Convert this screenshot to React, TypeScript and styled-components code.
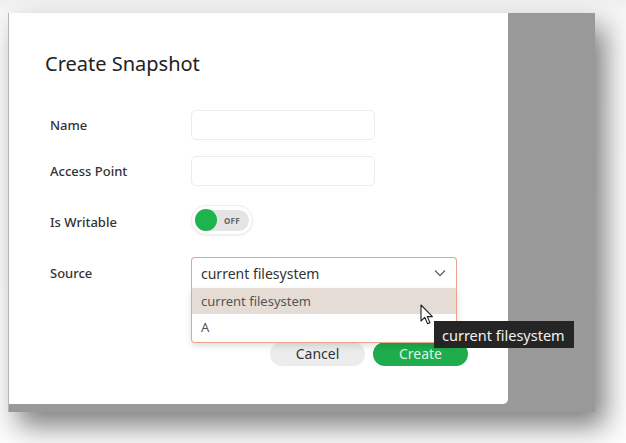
import React from "react";
import styled, { createGlobalStyle } from "styled-components";

const Global = createGlobalStyle`
  html, body { margin: 0; padding: 0; }
  body {
    width: 626px;
    height: 443px;
    overflow: hidden;
    background: linear-gradient(180deg, #f0f0f0 0px, #f6f6f6 12px, #fbfbfb 40px, #fdfdfd 100%);
    font-family: "Noto Sans", "Open Sans", sans-serif;
  }
`;

const Page = styled.div`
  padding: 13px 0 0 8px;
`;

const Frame = styled.div`
  width: 587px;
  height: 399px;
  background: #999999;
  border-left: 1px solid #b4b4b4;
  box-sizing: border-box;
  box-shadow: 10px 14px 26px rgba(0, 0, 0, 0.5);
  display: flex;
  align-items: flex-start;
`;

const Dialog = styled.div`
  position: relative;
  width: 499px;
  height: 391px;
  background: #ffffff;
  border-bottom-right-radius: 5px;
  box-sizing: border-box;
  padding: 38px 40px 0 36px;
  display: flex;
  flex-direction: column;
`;

const Title = styled.h2`
  margin: 0;
  font-size: 20px;
  line-height: 25px;
  font-weight: 400;
  color: #222;
`;

const Form = styled.div`
  margin-top: 34px;
  padding-left: 5px;
  display: grid;
  grid-template-columns: 141px 266px;
  grid-template-rows: 30px 30px 39px 31px;
  row-gap: 16px;
  align-items: center;
`;

const Label = styled.label`
  font-size: 13px;
  color: #333;
  font-weight: 500;
`;

const Input = styled.div`
  width: 184px;
  height: 30px;
  box-sizing: border-box;
  border: 1.5px solid #ececec;
  border-radius: 5px;
  background: #fff;
`;

const ToggleCell = styled.div`
  align-self: start;
  padding-top: 3px;
`;

const Toggle = styled.div`
  width: 62px;
  height: 30px;
  box-sizing: border-box;
  border-radius: 15px;
  background: #fff;
  border: 1px solid #eeeeee;
  box-shadow: 0 1px 2px rgba(0, 0, 0, 0.08);
  display: flex;
  align-items: center;
  padding: 0 3px;
  position: relative;
`;

const Track = styled.div`
  flex: 1;
  height: 21px;
  border-radius: 11px;
  background: #e4e4e4;
  display: flex;
  align-items: center;
  justify-content: flex-end;
  padding-right: 9px;
  font-size: 8px;
  font-weight: 700;
  color: #666;
  letter-spacing: 0.3px;
`;

const Knob = styled.div`
  position: absolute;
  left: 3px;
  top: 50%;
  width: 22px;
  height: 22px;
  margin-top: -11px;
  border-radius: 50%;
  background: #1db34d;
`;

const SelectWrap = styled.div`
  position: relative;
  width: 266px;
  height: 31px;
`;

const Trigger = styled.div`
  height: 31px;
  box-sizing: border-box;
  border: 1.5px solid #e9a48d;
  border-bottom: none;
  border-radius: 4px 4px 0 0;
  display: flex;
  align-items: center;
  justify-content: space-between;
  padding: 0 10px 0 9px;
  font-size: 14px;
  color: #333;
  background: #fff;
`;

const Menu = styled.div`
  position: absolute;
  top: 31px;
  left: 0;
  right: 0;
  z-index: 2;
  box-sizing: border-box;
  border: 1.5px solid #e9a48d;
  border-top: none;
  border-radius: 0 0 4px 4px;
  background: #fff;
  box-shadow: 0 3px 6px rgba(0, 0, 0, 0.12);
  padding-bottom: 2px;
`;

const Option = styled.div<{ $active?: boolean }>`
  height: 26px;
  display: flex;
  align-items: center;
  padding-left: 9px;
  font-size: 13px;
  color: #555;
  background: ${(p) => (p.$active ? "#e5dcd6" : "#fff")};
`;

const Buttons = styled.div`
  margin-top: 54px;
  display: flex;
  justify-content: flex-end;
  gap: 8px;
`;

const Button = styled.button<{ $primary?: boolean }>`
  width: 95px;
  height: 24px;
  border: none;
  border-radius: 12px;
  font-family: inherit;
  font-size: 14px;
  line-height: 24px;
  padding: 0;
  background: ${(p) => (p.$primary ? "#1eac4c" : "#ececec")};
  color: ${(p) => (p.$primary ? "#d9f6e2" : "#333")};
`;

const Tooltip = styled.div`
  position: absolute;
  left: 425px;
  top: 308px;
  z-index: 5;
  height: 27px;
  box-sizing: border-box;
  padding: 0 9px 0 8px;
  background: #252525;
  color: #f2f2f2;
  font-size: 14.5px;
  display: flex;
  align-items: center;
  white-space: nowrap;
`;

const Cursor = styled.svg`
  position: absolute;
  left: 411px;
  top: 291px;
  z-index: 4;
`;

const Chevron = () => (
  <svg width="12" height="8" viewBox="0 0 12 8">
    <path d="M1 1.5 L6 6.5 L11 1.5" fill="none" stroke="#666" strokeWidth="1.3" />
  </svg>
);

export default function App() {
  return (
    <>
      <Global />
      <Page>
        <Frame>
          <Dialog>
            <Title>Create Snapshot</Title>
            <Form>
              <Label>Name</Label>
              <Input />
              <Label>Access Point</Label>
              <Input />
              <Label>Is Writable</Label>
              <ToggleCell>
                <Toggle>
                  <Knob />
                  <Track>OFF</Track>
                </Toggle>
              </ToggleCell>
              <Label>Source</Label>
              <SelectWrap>
                <Trigger>
                  <span>current filesystem</span>
                  <Chevron />
                </Trigger>
                <Menu>
                  <Option $active>current filesystem</Option>
                  <Option>A</Option>
                </Menu>
              </SelectWrap>
            </Form>
            <Buttons>
              <Button>Cancel</Button>
              <Button $primary>Create</Button>
            </Buttons>
            <Cursor width="14" height="22" viewBox="0 0 14 22">
              <path
                d="M1 1 L1 17 L4.8 13.4 L7.6 19.8 L10 18.8 L7.3 12.6 L12.4 12.6 Z"
                fill="#fff"
                stroke="#222"
                strokeWidth="1.1"
                strokeLinejoin="round"
              />
            </Cursor>
            <Tooltip>current filesystem</Tooltip>
          </Dialog>
        </Frame>
      </Page>
    </>
  );
}
